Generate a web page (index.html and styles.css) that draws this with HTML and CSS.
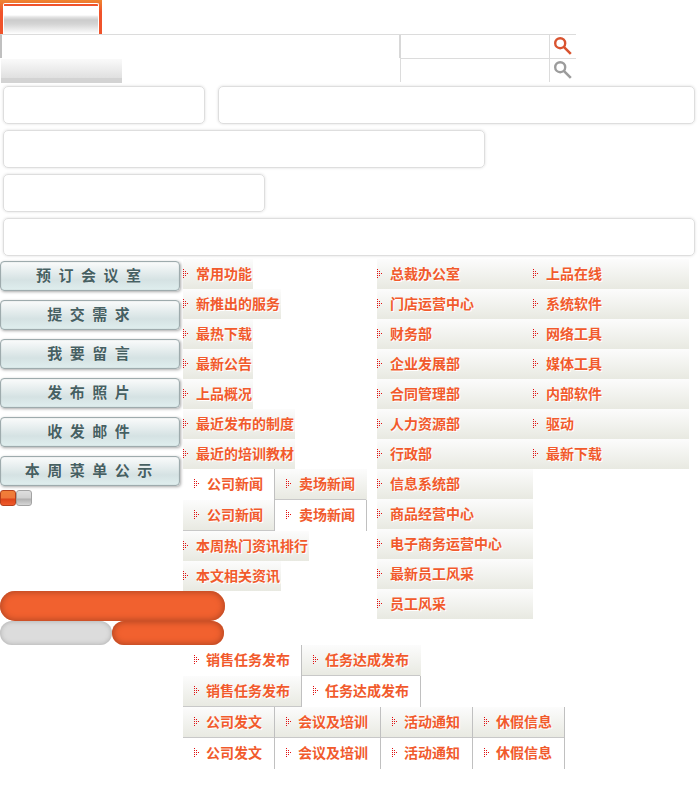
FILE: index.html
```html
<!DOCTYPE html>
<html lang="zh-CN">
<head>
<meta charset="utf-8">
<title>上品</title>
<link rel="stylesheet" href="styles.css">
</head>
<body>
<svg class="defs" aria-hidden="true">
  <symbol id="lens" viewBox="0 0 18 18"><circle cx="6.2" cy="6.2" r="5" fill="none" stroke="currentColor" stroke-width="2.4"/><path d="M9.8 9.8L16.8 16.8" fill="none" stroke="currentColor" stroke-width="2.6"/></symbol>
  <symbol id="dots" viewBox="0 0 5 9"><path d="M0 0h1v1h-1zM0 2h1v1h-1zM0 4h1v1h-1zM0 6h1v1h-1zM0 8h1v1h-1zM2 2h1v1h-1zM2 4h1v1h-1zM2 6h1v1h-1zM4 4h1v1h-1z" fill="currentColor" shape-rendering="crispEdges"/></symbol>
</svg>
<header>
  <div class="home-tab"><div class="home-face"></div></div>
  <div class="bar bar-main">
    <div class="bar-space"></div>
    <form class="search"><input type="text" aria-label="搜索"><button type="button" aria-label="搜索"><svg><use href="#lens"/></svg></button></form>
  </div>
  <div class="bar">
    <div class="bar-space"><div class="sub-tab"></div></div>
    <form class="search search-idle"><input type="text" aria-label="搜索"><button type="button" aria-label="搜索"><svg><use href="#lens"/></svg></button></form>
  </div>
</header>
<section class="boxes">
  <div class="box-row"><div class="box box-s"></div><div class="box box-fill"></div></div>
  <div class="box box-l"></div>
  <div class="box box-m"></div>
  <div class="box"></div>
</section>
<main>
  <div class="left">
    <div class="left-top">
      <div class="actions">
        <button type="button">预&ensp;订&ensp;会&ensp;议&ensp;室</button>
        <button type="button">提&ensp;交&ensp;需&ensp;求</button>
        <button type="button">我&ensp;要&ensp;留&ensp;言</button>
        <button type="button">发&ensp;布&ensp;照&ensp;片</button>
        <button type="button">收&ensp;发&ensp;邮&ensp;件</button>
        <button type="button">本&ensp;周&ensp;菜&ensp;单&ensp;公&ensp;示</button>
        <div class="squares"><span class="square square-on"></span><span class="square"></span></div>
      </div>
      <div class="titles">
        <a class="title" href="#"><svg><use href="#dots"/></svg>常用功能</a>
        <a class="title" href="#"><svg><use href="#dots"/></svg>新推出的服务</a>
        <a class="title" href="#"><svg><use href="#dots"/></svg>最热下载</a>
        <a class="title" href="#"><svg><use href="#dots"/></svg>最新公告</a>
        <a class="title" href="#"><svg><use href="#dots"/></svg>上品概况</a>
        <a class="title" href="#"><svg><use href="#dots"/></svg>最近发布的制度</a>
        <a class="title" href="#"><svg><use href="#dots"/></svg>最近的培训教材</a>
        <nav class="tabs news">
          <a class="tab" href="#"><svg><use href="#dots"/></svg>公司新闻</a><a class="tab shaded open" href="#"><svg><use href="#dots"/></svg>卖场新闻</a>
        </nav>
        <nav class="tabs news">
          <a class="tab shaded" href="#"><svg><use href="#dots"/></svg>公司新闻</a><a class="tab" href="#"><svg><use href="#dots"/></svg>卖场新闻</a>
        </nav>
        <a class="title" href="#"><svg><use href="#dots"/></svg>本周热门资讯排行</a>
        <a class="title" href="#"><svg><use href="#dots"/></svg>本文相关资讯</a>
      </div>
    </div>
    <div class="pills">
      <div class="pill pill-wide"></div>
      <div class="pill pill-grey"></div>
      <div class="pill"></div>
    </div>
  </div>
  <div class="right">
    <div class="column">
      <a class="title" href="#"><svg><use href="#dots"/></svg>总裁办公室</a>
      <a class="title" href="#"><svg><use href="#dots"/></svg>门店运营中心</a>
      <a class="title" href="#"><svg><use href="#dots"/></svg>财务部</a>
      <a class="title" href="#"><svg><use href="#dots"/></svg>企业发展部</a>
      <a class="title" href="#"><svg><use href="#dots"/></svg>合同管理部</a>
      <a class="title" href="#"><svg><use href="#dots"/></svg>人力资源部</a>
      <a class="title" href="#"><svg><use href="#dots"/></svg>行政部</a>
      <a class="title" href="#"><svg><use href="#dots"/></svg>信息系统部</a>
      <a class="title" href="#"><svg><use href="#dots"/></svg>商品经营中心</a>
      <a class="title" href="#"><svg><use href="#dots"/></svg>电子商务运营中心</a>
      <a class="title" href="#"><svg><use href="#dots"/></svg>最新员工风采</a>
      <a class="title" href="#"><svg><use href="#dots"/></svg>员工风采</a>
    </div>
    <div class="column">
      <a class="title" href="#"><svg><use href="#dots"/></svg>上品在线</a>
      <a class="title" href="#"><svg><use href="#dots"/></svg>系统软件</a>
      <a class="title" href="#"><svg><use href="#dots"/></svg>网络工具</a>
      <a class="title" href="#"><svg><use href="#dots"/></svg>媒体工具</a>
      <a class="title" href="#"><svg><use href="#dots"/></svg>内部软件</a>
      <a class="title" href="#"><svg><use href="#dots"/></svg>驱动</a>
      <a class="title" href="#"><svg><use href="#dots"/></svg>最新下载</a>
    </div>
  </div>
</main>
<section class="more">
  <nav class="tabs tasks">
    <a class="tab" href="#"><svg><use href="#dots"/></svg>销售任务发布</a><a class="tab shaded open" href="#"><svg><use href="#dots"/></svg>任务达成发布</a>
  </nav>
  <nav class="tabs tasks">
    <a class="tab shaded" href="#"><svg><use href="#dots"/></svg>销售任务发布</a><a class="tab" href="#"><svg><use href="#dots"/></svg>任务达成发布</a>
  </nav>
  <nav class="tabs">
    <a class="tab shaded" href="#"><svg><use href="#dots"/></svg>公司发文</a><a class="tab shaded" href="#"><svg><use href="#dots"/></svg>会议及培训</a><a class="tab shaded" href="#"><svg><use href="#dots"/></svg>活动通知</a><a class="tab shaded" href="#"><svg><use href="#dots"/></svg>休假信息</a>
  </nav>
  <nav class="tabs">
    <a class="tab" href="#"><svg><use href="#dots"/></svg>公司发文</a><a class="tab" href="#"><svg><use href="#dots"/></svg>会议及培训</a><a class="tab" href="#"><svg><use href="#dots"/></svg>活动通知</a><a class="tab" href="#"><svg><use href="#dots"/></svg>休假信息</a>
  </nav>
</section>
</body>
</html>
```
FILE: styles.css
```css
* { box-sizing: border-box; }

body {
  margin: 0;
  background: #fff;
  color: #f15a2c;
  font: bold 14px/28px "Noto Sans CJK SC", sans-serif;
}

svg { display: block; }
.defs { position: absolute; width: 0; height: 0; }
a { color: inherit; text-decoration: none; }

/* Header */
.home-tab {
  width: 102px;
  height: 34px;
  padding: 3px 3px 0;
  background: linear-gradient(#ee8430, #f0532b 12px);
}
.home-face {
  height: 31px;
  border: 1px solid #fff;
  border-bottom: 0;
  border-radius: 2px 2px 0 0;
  background: linear-gradient(#f0532b 2px, #fff 2px, #fff 11px, #e4e4e4 13px, #ccc 16px, #d4d4d4 20px, #fff 30px);
}
.bar { display: flex; width: 576px; max-width: 100%; height: 24px; }
.bar-main { border-top: 1px solid #dcdcdc; border-left: 2px solid #c0c0c0; }
.bar-space { flex: 1; padding: 1px 0 0 1px; }
.sub-tab {
  width: 121px;
  height: 24px;
  background: linear-gradient(#fafafa, #e0e0e0 19px, #d3d3d3 19px);
}
.search {
  display: flex;
  width: 176px;
  border-left: 1px solid #dcdcdc;
}
.bar-main .search { width: 177px; border-left: 2px solid #d8d8d8; }
.search-idle { border-top: 1px solid #dcdcdc; }
.search input { flex: 1; min-width: 0; padding: 0 4px; border: 0; background: none; }
.search button {
  display: flex;
  align-items: flex-start;
  width: 27px;
  padding: 2px 0 0 4px;
  border: 0;
  border-left: 1px solid #dcdcdc;
  background: none;
  color: #d9532f;
}
.search-idle button { color: #9c9c9c; }
.search button svg { width: 18px; height: 18px; }

/* Frames */
.boxes { display: grid; gap: 6px; padding: 4px 3px 3px; }
.box-row { display: flex; gap: 13px; }
.box {
  height: 38px;
  border: 1px solid #dedede;
  border-radius: 5px;
  box-shadow: 0 0 3px #ddd;
}
.box-s { width: 202px; }
.box-fill { flex: 1; }
.box-l { width: 482px; }
.box-m { width: 262px; }

/* Main area */
main { display: flex; align-items: flex-start; }
.left { width: 377px; }
.left-top { display: flex; gap: 3px; }
.actions {
  display: flex;
  flex-direction: column;
  gap: 9px;
  width: 180px;
  padding-top: 2px;
}
.actions button {
  height: 30px;
  padding: 0 3px 2px 0;
  border: 1px solid #9eabad;
  border-radius: 4px;
  background: linear-gradient(#fafbfb, #d5e2e3 18px, #dfeeee);
  box-shadow: 1px 1px 3px #aaa, inset 0 0 1px #9eabad;
  color: #466062;
  font: bold 15px/26px "Noto Sans CJK SC", sans-serif;
  text-shadow: 0 0 1px #fff;
}
.squares { display: flex; margin-top: -5px; }
.square {
  width: 16px;
  height: 16px;
  border: 1px solid #a3a3a3;
  border-radius: 3px;
  background: linear-gradient(#dedede, #d0d0d0 7px, #b0b0b0 8px, #d6d6d6);
}
.square-on {
  border-color: #b6401d;
  background: linear-gradient(#f08038, #f0763a 7px, #dc4419 8px, #ef5b2c);
}

.title, .tab {
  display: flex;
  align-items: center;
  text-shadow: 0 0 1px #fff, 1px 1px 0 #fff;
  white-space: nowrap;
}
.title svg, .tab svg { width: 5px; height: 9px; color: #e01010; }
.titles { display: flex; flex-direction: column; align-items: flex-start; }
.title {
  gap: 8px;
  height: 30px;
  padding: 0 1px 2px 0;
  background: linear-gradient(#fcfcfc, #e8e9e1);
}
.right { display: flex; align-items: flex-start; }
.column { width: 156px; }

/* Tabs */
.tabs { display: flex; }
.tab {
  gap: 7px;
  height: 31px;
  padding: 0 12px 3px 11px;
  border-right: 1px solid #c0c0c0;
}
.news .tab { gap: 8px; padding-right: 11px; }
.tasks .tab { padding-right: 11px; }
.shaded {
  background: linear-gradient(#fcfcfc, #e8e9e1);
  box-shadow: inset 0 -1px #c8c8c8;
}
.open { border-right-color: transparent; }
.more { padding-left: 183px; }

/* Pills */
.pills { display: flex; flex-wrap: wrap; width: 225px; }
.pill {
  width: 112px;
  height: 24px;
  border-radius: 12px;
  background: #f1612f;
  box-shadow: inset 0 0 6px 1px #b04522;
}
.pill-wide { width: 225px; height: 30px; border-radius: 15px; }
.pill-grey { background: #dcdcdc; box-shadow: inset 0 0 5px #aaa; }
```
